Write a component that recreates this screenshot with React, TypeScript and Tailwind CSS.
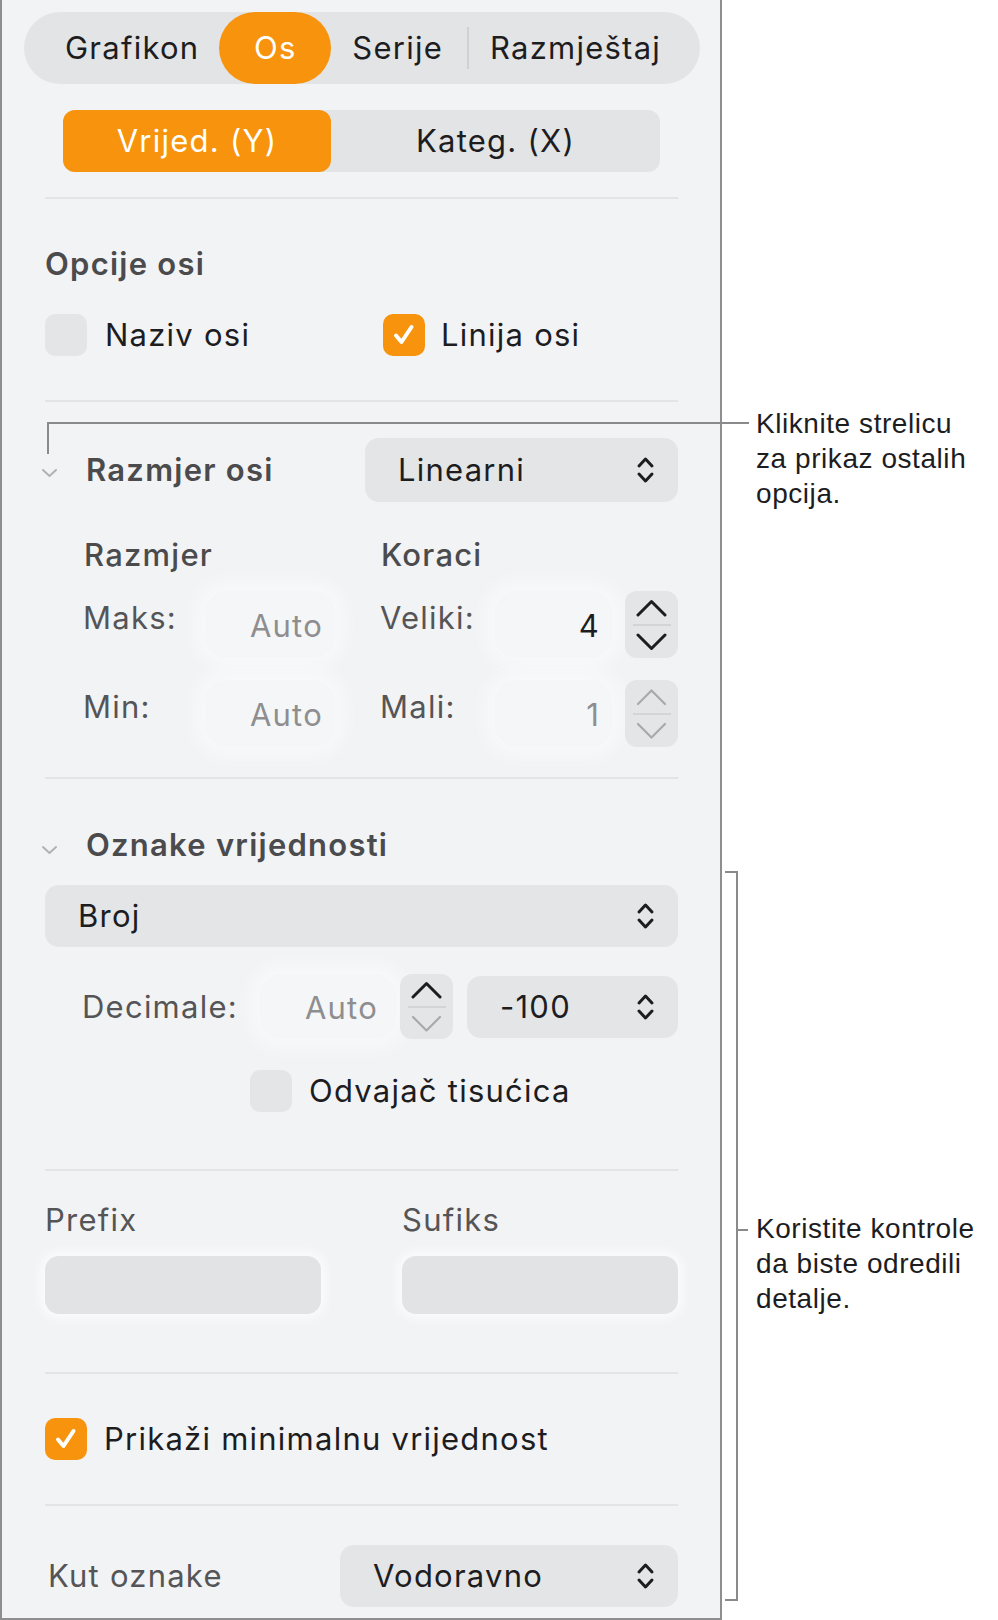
import React from "react";

const ORANGE = "bg-[#f7930c]";

function PopupIcon() {
  return (
    <svg width="19" height="30" viewBox="0 0 19 30" fill="none" stroke="#1d1d1f" strokeWidth="3" strokeLinecap="round" strokeLinejoin="round">
      <path d="M3 11 L9.5 4 L16 11" />
      <path d="M3 19 L9.5 26 L16 19" />
    </svg>
  );
}

function Chevron({ up, disabled }: { up?: boolean; disabled?: boolean }) {
  return (
    <svg width="31" height="18" viewBox="0 0 31 18" fill="none" stroke={disabled ? "#a9a9ab" : "#1d1d1f"} strokeWidth={disabled ? 2.2 : 3} strokeLinecap="round" strokeLinejoin="round">
      {up ? <path d="M2 16 L15.5 2.5 L29 16" /> : <path d="M2 2 L15.5 15.5 L29 2" />}
    </svg>
  );
}

function Stepper({ disabled, downDisabled }: { disabled?: boolean; downDisabled?: boolean }) {
  return (
    <div className="w-[53px] h-full rounded-[12px] bg-[#e4e5e7] flex flex-col items-center justify-center">
      <Chevron up disabled={disabled} />
      <div className="w-[38px] h-[2px] bg-[#d3d4d6] my-[7px]" />
      <Chevron disabled={disabled || downDisabled} />
    </div>
  );
}

function Check() {
  return (
    <svg width="26" height="26" viewBox="0 0 26 26" fill="none" stroke="white" strokeWidth="4" strokeLinecap="round" strokeLinejoin="round">
      <path d="M5 13.5 L10.5 20 L20.5 5" />
    </svg>
  );
}

function Box({ checked }: { checked?: boolean }) {
  return (
    <div className={`w-[42px] h-[42px] rounded-[10px] flex items-center justify-center shrink-0 ${checked ? ORANGE : "bg-[#e4e5e7]"}`}>
      {checked && <Check />}
    </div>
  );
}

function Disclosure() {
  return (
    <svg width="17" height="10" viewBox="0 0 17 10" fill="none" stroke="#b2b2b4" strokeWidth="2" strokeLinecap="round" strokeLinejoin="round">
      <path d="M2 2 L8.5 8 L15 2" />
    </svg>
  );
}

function Divider() {
  return <div className="h-[2px] bg-[#e3e4e6] ml-[43px] mr-[42px]" />;
}

function Popup({ label, w, tall }: { label: string; w: string; tall?: boolean }) {
  return (
    <div className={`${w} ${tall ? "h-[64px]" : "h-[62px]"} rounded-[14px] bg-[#e4e5e7] flex items-center justify-between pl-[33px] pr-[23px] text-[#1d1d1f]`}>
      <span>{label}</span>
      <PopupIcon />
    </div>
  );
}

function Field({ value, w, dim, pr = "pr-[12px]" }: { value: string; w: string; dim?: boolean; pr?: string }) {
  return (
    <div className={`${w} h-full rounded-[22px] bg-white/25 shadow-[0_0_18px_10px_rgba(255,255,255,0.5)] flex items-center justify-end ${pr} ${dim ? "text-[#8e8e90]" : "text-[#1d1d1f]"}`}>
      <span className="pt-[3px]">{value}</span>
    </div>
  );
}

export default function App() {
  return (
    <div className="relative w-[998px] h-[1620px] bg-white flex font-[Inter,'Noto_Sans',sans-serif] text-[31px] leading-[38px] tracking-[0.04em]">
      <div className="w-[722px] h-[1620px] shrink-0 bg-[#f2f3f5] border-l-2 border-r-2 border-b-2 border-[#8e8e90] flex flex-col pt-[12px]">
        {/* top tabs */}
        <div className="ml-[22px] mr-[20px] h-[72px] rounded-full bg-[#e3e4e6] flex items-center text-[#1d1d1f]">
          <span className="ml-[41px]">Grafikon</span>
          <div className={`ml-[20px] w-[112px] h-[72px] rounded-full ${ORANGE} text-white flex items-center justify-center`}>Os</div>
          <span className="ml-[21px]">Serije</span>
          <div className="ml-[24px] w-[2px] h-[42px] bg-[#d0d1d3]" />
          <span className="ml-[21px]">Razmještaj</span>
        </div>

        {/* axis switch */}
        <div className="mt-[26px] ml-[61px] w-[597px] h-[62px] rounded-[12px] bg-[#e3e4e6] flex text-[#1d1d1f]">
          <div className={`w-[268px] h-full rounded-[12px] ${ORANGE} text-white flex items-center justify-center`}>Vrijed. (Y)</div>
          <div className="flex-1 flex items-center justify-center">Kateg. (X)</div>
        </div>

        <div className="mt-[25px]"><Divider /></div>

        {/* axis options */}
        <div className="mt-[46px] ml-[43px] font-semibold text-[#4b4b4d]">Opcije osi</div>
        <div className="mt-[31px] ml-[43px] h-[42px] flex items-center text-[#1d1d1f]">
          <div className="w-[338px] flex items-center gap-[18px]">
            <Box />
            <span>Naziv osi</span>
          </div>
          <div className="flex items-center gap-[16px]">
            <Box checked />
            <span>Linija osi</span>
          </div>
        </div>

        <div className="mt-[44px]"><Divider /></div>

        {/* axis scale */}
        <div className="mt-[36px] ml-[39px] mr-[42px] h-[64px] flex items-center">
          <div className="w-[17px] pt-[6px]"><Disclosure /></div>
          <span className="ml-[28px] font-semibold text-[#4b4b4d] flex-1">Razmjer osi</span>
          <Popup label="Linearni" w="w-[313px]" tall />
        </div>

        <div className="mt-[34px] ml-[82px] flex font-medium text-[#4b4b4d]">
          <span className="w-[297px]">Razmjer</span>
          <span>Koraci</span>
        </div>

        <div className="mt-[17px] ml-[81px] h-[67px] flex items-center text-[#555557]">
          <span className="w-[122px] mb-[13px]">Maks:</span>
          <Field value="Auto" w="w-[130px]" dim />
          <span className="ml-[45px] w-[115px] mb-[13px]">Veliki:</span>
          <Field value="4" w="w-[117px]" />
          <div className="ml-[13px] h-full"><Stepper /></div>
        </div>

        <div className="mt-[22px] ml-[81px] h-[67px] flex items-center text-[#555557]">
          <span className="w-[122px] mb-[13px]">Min:</span>
          <Field value="Auto" w="w-[130px]" dim />
          <span className="ml-[45px] w-[115px] mb-[13px]">Mali:</span>
          <Field value="1" w="w-[117px]" dim />
          <div className="ml-[13px] h-full"><Stepper disabled /></div>
        </div>

        <div className="mt-[30px]"><Divider /></div>

        {/* value labels */}
        <div className="mt-[47px] ml-[39px] flex items-center">
          <div className="w-[17px] pt-[10px]"><Disclosure /></div>
          <span className="ml-[28px] font-semibold text-[#4b4b4d]">Oznake vrijednosti</span>
        </div>

        <div className="mt-[21px] ml-[43px]">
          <Popup label="Broj" w="w-[633px]" />
        </div>

        <div className="mt-[27px] ml-[80px] h-[65px] flex items-center text-[#555557]">
          <span className="w-[178px]">Decimale:</span>
          <Field value="Auto" w="w-[136px]" dim pr="pr-[18px]" />
          <div className="ml-[4px] h-full"><Stepper downDisabled /></div>
          <div className="ml-[14px]">
            <Popup label="-100" w="w-[211px]" />
          </div>
        </div>

        <div className="mt-[31px] ml-[248px] h-[42px] flex items-center gap-[17px] text-[#1d1d1f]">
          <Box />
          <span>Odvajač tisućica</span>
        </div>

        <div className="mt-[57px]"><Divider /></div>

        {/* prefix / suffix */}
        <div className="mt-[30px] ml-[43px] mr-[42px] grid grid-cols-2 gap-x-[81px] text-[#555557]">
          <span>Prefix</span>
          <span>Sufiks</span>
          <div className="mt-[17px] h-[58px] rounded-[14px] bg-[#e2e3e5] shadow-[0_0_12px_4px_rgba(255,255,255,0.8)]" />
          <div className="mt-[17px] h-[58px] rounded-[14px] bg-[#e2e3e5] shadow-[0_0_12px_4px_rgba(255,255,255,0.8)]" />
        </div>

        <div className="mt-[58px]"><Divider /></div>

        <div className="mt-[44px] ml-[43px] h-[42px] flex items-center gap-[17px] text-[#1d1d1f]">
          <Box checked />
          <span>Prikaži minimalnu vrijednost</span>
        </div>

        <div className="mt-[44px]"><Divider /></div>

        <div className="mt-[39px] ml-[46px] mr-[42px] flex items-center justify-between">
          <span className="text-[#555557]">Kut oznake</span>
          <Popup label="Vodoravno" w="w-[338px]" />
        </div>
      </div>

      {/* annotations */}
      <div className="flex-1 flex flex-col pl-[34px] font-['Liberation_Sans',Arial,sans-serif] text-[28px] leading-[35px] tracking-[0.02em] text-[#1d1d1f]">
        <p className="mt-[406px]">Kliknite strelicu<br />za prikaz ostalih<br />opcija.</p>
        <p className="mt-[700px]">Koristite kontrole<br />da biste odredili<br />detalje.</p>
      </div>

      {/* callout lines */}
      <div className="absolute left-[47px] top-[422px] w-[702px] h-[2px] bg-[#8a8a8c]" />
      <div className="absolute left-[47px] top-[422px] w-[2px] h-[32px] bg-[#8a8a8c]" />
      <div className="absolute left-[725px] top-[871px] w-[13px] h-[730px] border-t-2 border-r-2 border-b-2 border-[#8a8a8c]" />
      <div className="absolute left-[736px] top-[1229px] w-[12px] h-[2px] bg-[#8a8a8c]" />
    </div>
  );
}
